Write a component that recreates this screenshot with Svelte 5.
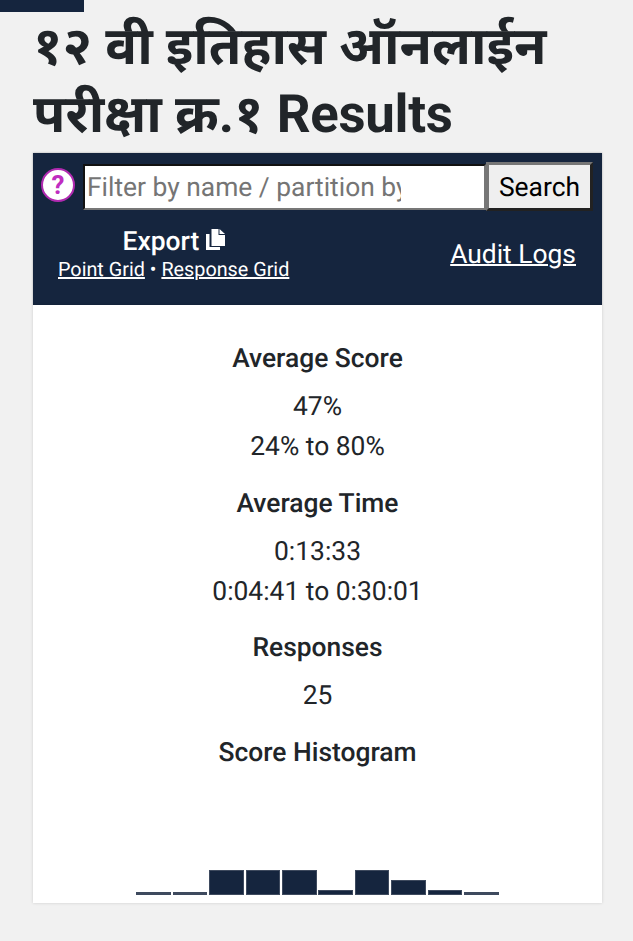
<script>
	const stats = [
		{ title: 'Average Score', lines: ['47%', '24% to 80%'] },
		{ title: 'Average Time', lines: ['0:13:33', '0:04:41 to 0:30:01'] },
		{ title: 'Responses', lines: ['25'] }
	];
	const bars = [1.6, 1.6, 24, 24, 24, 4, 24, 14, 4, 1.6];
</script>

<div class="page">
	<div class="tab"></div>
	<main>
		<h1>१२ वी इतिहास ऑनलाईन परीक्षा क्र.१ <span>Results</span></h1>
		<section class="toolbar">
			<div class="search">
				<button class="help">?</button>
				<input type="text" placeholder="Filter by name / partition by" />
				<button class="go">Search</button>
			</div>
			<div class="links">
				<div class="export">
					<div class="export-title">
						Export
						<svg width="19" height="21" viewBox="0 0 19 21">
							<path d="M5.5 0H12.5V6H19V17H5.5z" fill="#fff" />
							<path d="M13.5 0L19 5H13.5z" fill="#fff" />
							<path d="M0 5H3.5V18H14V21H0z" fill="#fff" />
						</svg>
					</div>
					<div class="grids"><a href="#a">Point Grid</a> • <a href="#b">Response Grid</a></div>
				</div>
				<a class="audit" href="#c">Audit Logs</a>
			</div>
		</section>
		<section class="card">
			{#each stats as stat}
				<h2>{stat.title}</h2>
				{#each stat.lines as line}
					<p>{line}</p>
				{/each}
			{/each}
			<h2>Score Histogram</h2>
			<div class="histogram">
				{#each bars as h}
					<div class="bar" class:thin={h < 2} style:height="{h + 1}px"></div>
				{/each}
			</div>
		</section>
	</main>
</div>

<style>
	:global(body) {
		background: #f1f1f1;
		font-family: Roboto, "Noto Sans", sans-serif;
		color: #212529;
		text-rendering: geometricPrecision;
	}

	.page {
		height: 941px;
		overflow: hidden;
	}

	.tab {
		width: 84px;
		height: 12px;
		background: #15253e;
	}

	main {
		margin: 0 31px 0 33px;
	}

	h1 {
		margin: 0 0 5px;
		font-size: 52.8px;
		font-weight: 700;
		line-height: 68px;
	}

	h1 span {
		letter-spacing: -0.3px;
	}

	.toolbar {
		background: #15253e;
		height: 152px;
		box-sizing: border-box;
		padding: 9px 9px 0 8px;
		color: #fff;
		box-shadow: 0 0 2px rgba(0, 0, 0, 0.3);
	}

	.search {
		display: flex;
		align-items: center;
	}

	.help {
		width: 34px;
		height: 34px;
		padding: 0 0 3px;
		margin: 0 8px 4px 0;
		flex: none;
		border-radius: 50%;
		border: 2px solid #b02ab0;
		background: #fff;
		color: #c02cc0;
		font: 700 26px Roboto, sans-serif;
	}

	input {
		flex: 1;
		min-width: 0;
		height: 46px;
		box-sizing: border-box;
		padding: 2px 83px 0 2px;
		border: 2px solid;
		border-color: #111 #777 #777 #111;
		background: #fff;
		font: 26.4px Roboto, sans-serif;
		text-rendering: geometricPrecision;
	}

	.go {
		width: 107px;
		height: 49px;
		flex: none;
		padding: 2px 0 0;
		border: 3px solid;
		border-color: #767676 #222 #222 #767676;
		background: #efefef;
		color: #000;
		font: 26.4px Roboto, sans-serif;
		text-rendering: geometricPrecision;
	}

	.links {
		display: flex;
		justify-content: space-between;
		align-items: center;
		margin-top: 15px;
		padding: 0 17px;
	}

	.export {
		text-align: center;
	}

	.export-title {
		font-size: 26.4px;
		font-weight: 500;
		line-height: 32px;
	}

	.grids {
		font-size: 19.8px;
		line-height: 24px;
	}

	.toolbar a {
		color: #fff;
		text-decoration-thickness: 2px;
	}

	.audit {
		font-size: 26.4px;
		margin-top: 2px;
	}

	.card {
		background: #fff;
		height: 598px;
		box-sizing: border-box;
		padding-top: 36px;
		text-align: center;
		box-shadow: 0 0 3px rgba(0, 0, 0, 0.15);
		display: flex;
		flex-direction: column;
	}

	h2 {
		margin: 18.6px 0 10px;
		font-size: 26.4px;
		font-weight: 500;
		line-height: 36px;
	}

	h2:first-child {
		margin-top: 0;
	}

	p {
		margin: 0;
		font-size: 26.4px;
		line-height: 40px;
	}

	.histogram {
		margin-top: auto;
		margin-bottom: 8px;
		display: flex;
		justify-content: center;
		align-items: flex-end;
		gap: 1.8px;
	}

	.bar {
		width: 34.65px;
		background: #15253e;
		border: 1px solid #3e4a5e;
		box-sizing: border-box;
	}

	.thin {
		background: #3e4a5e;
	}
</style>
